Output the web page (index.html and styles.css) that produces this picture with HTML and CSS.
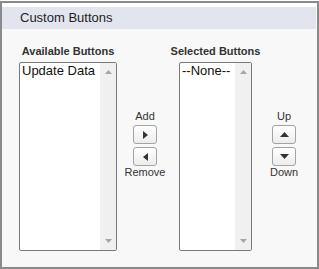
FILE: index.html
```html
<!DOCTYPE html>
<html lang="en">
<head>
  <meta charset="UTF-8" />
  <title>Custom Buttons</title>
  <link rel="stylesheet" href="styles.css">
</head>
<body>
  <div class="panel">
    <div class="panel-header">Custom Buttons</div>

    <div class="picker">
      <div class="list-col wide">
        <div class="list-label">Available Buttons</div>
        <div class="listbox">
          <div class="list-items">
            <div class="list-item">Update Data</div>
          </div>
          <div class="scrollbar">
            <svg class="scroll-arrow" width="7" height="4" viewBox="0 0 7 4"><polygon points="0,4 7,4 3.5,0" fill="#a6a6a6"/></svg>
            <svg class="scroll-arrow" width="7" height="4" viewBox="0 0 7 4"><polygon points="0,0 7,0 3.5,4" fill="#a6a6a6"/></svg>
          </div>
        </div>
      </div>

      <div class="move-col add-col">
        <div class="move-label">Add</div>
        <button class="move-btn" title="Add">
          <svg width="5" height="8" viewBox="0 0 5 8"><polygon points="0,0 5,4 0,8" fill="#333"/></svg>
        </button>
        <button class="move-btn" title="Remove">
          <svg width="5" height="8" viewBox="0 0 5 8"><polygon points="5,0 0,4 5,8" fill="#333"/></svg>
        </button>
        <div class="move-label">Remove</div>
      </div>

      <div class="list-col narrow">
        <div class="list-label">Selected Buttons</div>
        <div class="listbox">
          <div class="list-items">
            <div class="list-item">--None--</div>
          </div>
          <div class="scrollbar">
            <svg class="scroll-arrow" width="7" height="4" viewBox="0 0 7 4"><polygon points="0,4 7,4 3.5,0" fill="#a6a6a6"/></svg>
            <svg class="scroll-arrow" width="7" height="4" viewBox="0 0 7 4"><polygon points="0,0 7,0 3.5,4" fill="#a6a6a6"/></svg>
          </div>
        </div>
      </div>

      <div class="move-col order-col">
        <div class="move-label">Up</div>
        <button class="move-btn" title="Up">
          <svg width="9" height="5" viewBox="0 0 9 5"><polygon points="0,5 9,5 4.5,0" fill="#333"/></svg>
        </button>
        <button class="move-btn" title="Down">
          <svg width="9" height="5" viewBox="0 0 9 5"><polygon points="0,0 9,0 4.5,5" fill="#333"/></svg>
        </button>
        <div class="move-label">Down</div>
      </div>
    </div>
  </div>
</body>
</html>
```

FILE: styles.css
```css
body {
  margin: 0;
  padding: 0;
  font-family: "Liberation Sans", Arial, sans-serif;
  color: #222;
  background: #fff;
}

.panel {
  box-sizing: border-box;
  margin-top: 1px;
  width: 319px;
  height: 268px;
  border: 2px solid #8a8a8a;
  background: #f8f8f8;
}

.panel-header {
  height: 22px;
  line-height: 21px;
  border-top: 4px solid #fff;
  margin-right: 1px;
  padding-left: 18px;
  background: #e2e5ee;
  font-size: 13px;
  color: #222;
}

.picker {
  display: flex;
  align-items: flex-start;
  padding: 16px 0 0 17px;
}

.list-col {
  display: flex;
  flex-direction: column;
  align-items: center;
  flex: none;
}

.list-col.wide {
  width: 98px;
}

.list-col.narrow {
  width: 73px;
}

.list-label {
  font-size: 11px;
  font-weight: bold;
  line-height: 13px;
  color: #333;
  white-space: nowrap;
  margin-bottom: 4px;
}

.listbox {
  box-sizing: border-box;
  display: flex;
  width: 100%;
  height: 189px;
  border: 1px solid #7a7a7a;
  border-radius: 2px;
  background: #fff;
}

.list-items {
  flex: 1;
  min-width: 0;
}

.list-item {
  padding: 0 2px;
  font-size: 13px;
  line-height: 15px;
  color: #111;
  white-space: nowrap;
  overflow: hidden;
}

.scrollbar {
  width: 16px;
  background: #f0f0f0;
  display: flex;
  flex-direction: column;
  justify-content: space-between;
  align-items: center;
  padding: 7px 0 7px;
}

.scroll-arrow {
  display: block;
}

.move-col {
  display: flex;
  flex-direction: column;
  align-items: center;
  flex: none;
  width: 24px;
  padding-top: 65px;
}

.add-col {
  margin: 0 22px 0 16px;
}

.order-col {
  margin-left: 20px;
}

.move-label {
  font-size: 11px;
  line-height: 13px;
  color: #333;
  white-space: nowrap;
}

.move-btn {
  box-sizing: border-box;
  display: flex;
  align-items: center;
  justify-content: center;
  width: 24px;
  height: 19px;
  padding: 0;
  margin-top: 2px;
  border: 1px solid #a3a3a3;
  border-radius: 3px;
  background: linear-gradient(#ffffff, #ececec);
  cursor: pointer;
}

.move-btn + .move-btn {
  margin-top: 3px;
}

.move-btn svg {
  display: block;
}
```
